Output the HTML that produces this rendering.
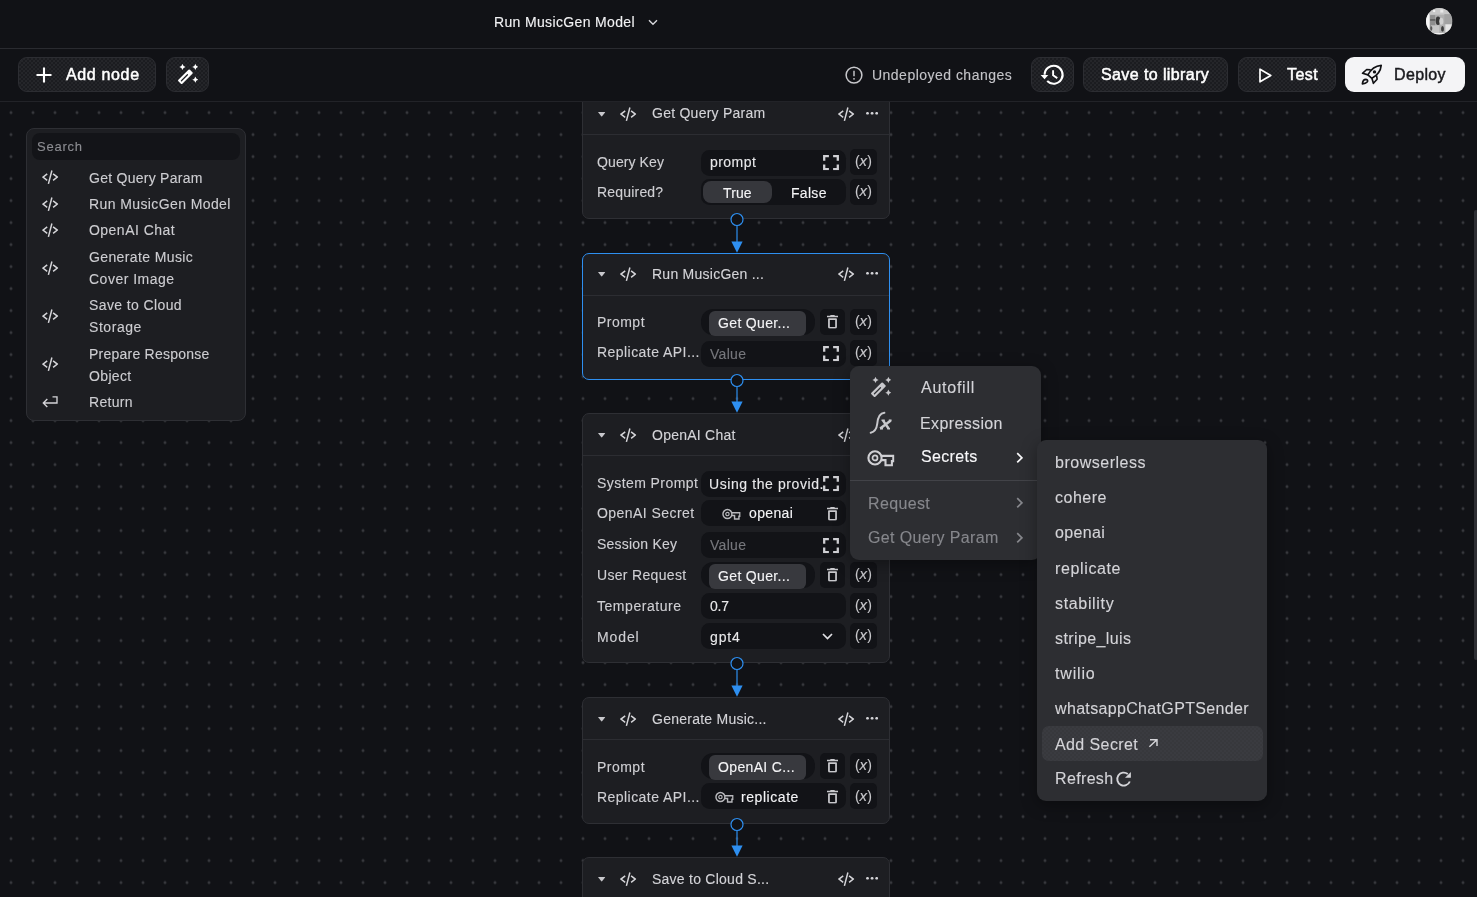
<!DOCTYPE html>
<html><head><meta charset="utf-8">
<style>
*{box-sizing:border-box;margin:0;padding:0}
html,body{width:1477px;height:897px;overflow:hidden;background:#111216;font-family:"Liberation Sans",sans-serif;color:#e4e4e7}
.a{position:absolute}
.t{position:absolute;white-space:nowrap;line-height:1;will-change:transform;-webkit-text-stroke:0.12px currentColor}
svg{position:absolute;overflow:visible}
#canvas{position:absolute;left:0;top:101px;width:1477px;height:796px;
 background-image:radial-gradient(circle at 11px 11px,#37383d 0,#37383d 1.15px,transparent 1.8px);
 background-size:22px 22px;background-position:0 0.6px}
.btn{position:absolute;top:57px;height:35px;border-radius:9px;background-color:#1b1c20;background-image:radial-gradient(circle at 1px 1px,rgba(255,255,255,0.045) 0.7px,transparent 1px),radial-gradient(circle at 3px 3px,rgba(255,255,255,0.045) 0.7px,transparent 1px);background-size:4px 4px;border:1px solid #2c2d32}
.card{position:absolute;left:582px;width:308px;background:#1d1e22;border:1px solid #2e2f34;border-radius:7px}
.med{-webkit-text-stroke:0.35px currentColor}
</style></head><body>

<svg width="0" height="0" style="position:absolute">
<defs>
<symbol id="code" viewBox="0 0 16.3 14.4"><path d="M5.2 3.8L0.95 7.1L5.2 10.4M9.9 0.5L6.4 13.9M11.1 3.8L15.35 7.1L11.1 10.4" fill="none" stroke="currentColor" stroke-width="1.5"/></symbol>
<symbol id="ret" viewBox="0 0 16 12.2"><path d="M10.5 0.9H15V7H1.3M5.3 3L1.3 7L5.3 11" fill="none" stroke="currentColor" stroke-width="1.35"/></symbol>
<symbol id="caret" viewBox="0 0 7.4 4.7"><path d="M0 0H7.4L3.7 4.7Z" fill="currentColor"/></symbol>
<symbol id="dots" viewBox="0 0 12.2 2.8"><circle cx="1.5" cy="1.4" r="1.45" fill="currentColor"/><circle cx="6.1" cy="1.4" r="1.45" fill="currentColor"/><circle cx="10.7" cy="1.4" r="1.45" fill="currentColor"/></symbol>
<symbol id="expand" viewBox="0 0 16 15.3"><path d="M1.2 5.8V1.2H5.9M10.1 1.2H14.8V5.8M14.8 9.5V14.1H10.1M5.9 14.1H1.2V9.5" fill="none" stroke="currentColor" stroke-width="2.3"/></symbol>
<symbol id="trash" viewBox="0 0 11 13.5"><path d="M0.2 1.45H10.8" stroke="currentColor" stroke-width="1.5" stroke-linecap="round"/><path d="M3.2 0.9Q3.2 -0.1 4.2 -0.1H6.8Q7.8 -0.1 7.8 0.9Z" fill="currentColor"/><path d="M1.95 4.0V12.1Q1.95 12.75 2.6 12.75H8.4Q9.05 12.75 9.05 12.1V4.0Z" fill="none" stroke="currentColor" stroke-width="1.75" stroke-linejoin="round"/></symbol>
<symbol id="key" viewBox="0 0 27.5 18"><circle cx="8" cy="8.9" r="6.6" fill="none" stroke="currentColor" stroke-width="2.1"/><circle cx="8" cy="8.9" r="2.5" fill="none" stroke="currentColor" stroke-width="1.7"/><path d="M14.3 6.9H26.3V12.1H24.9V16.2H18.5V11.1H14.2" fill="none" stroke="currentColor" stroke-width="2.1"/></symbol>
<symbol id="wand" viewBox="0 0 20 20"><g transform="translate(7.4 12.8) rotate(-45)"><path d="M-7.1 -2.8H7.1Q8.15 -2.8 8.15 -1.75V1.75Q8.15 2.8 7.1 2.8H-7.1Q-8.15 2.8 -8.15 1.75V-1.75Q-8.15 -2.8 -7.1 -2.8Z M-5.6 -0.6H2.9Q3.5 -0.6 3.5 0Q3.5 0.6 2.9 0.6H-5.6Q-6.2 0.6 -6.2 0Q-6.2 -0.6 -5.6 -0.6Z" fill="currentColor" fill-rule="evenodd"/></g><path d="M4.5 -0.20000000000000018Q5.06 2.34 7.6 2.9Q5.06 3.46 4.5 6.0Q3.94 3.46 1.4 2.9Q3.94 2.34 4.5 -0.20000000000000018Z M17.4 -0.20000000000000018Q17.96 2.34 20.5 2.9Q17.96 3.46 17.4 6.0Q16.84 3.46 14.299999999999999 2.9Q16.84 2.34 17.4 -0.20000000000000018Z M17.4 12.6Q17.96 15.14 20.5 15.7Q17.96 16.26 17.4 18.8Q16.84 16.26 14.299999999999999 15.7Q16.84 15.14 17.4 12.6Z" fill="currentColor"/></symbol>
<symbol id="chevr" viewBox="0 0 7 11.6"><path d="M1.2 1.2L5.9 5.8L1.2 10.4" fill="none" stroke="currentColor" stroke-width="1.7"/></symbol>
</defs></svg>
<div id="canvas"></div>
<div class="a" style="left:26px;top:128px;width:220px;height:292.5px;background:#1d1e22;border-radius:8px;border:1px solid #2e2f34"></div>
<div class="a" style="left:31.7px;top:133.4px;width:208.5px;height:26.2px;background:#131418;border-radius:8px;"></div>
<div class="t" style="left:37.3px;top:140.00px;font-size:13px;letter-spacing:0.75px;color:#8b8c91;">Search</div>
<svg style="left:41.7px;top:169.8px;color:#d4d4d8" width="16.3" height="14.4"><use href="#code"/></svg>
<div class="t" style="left:89.1px;top:171.00px;font-size:14px;letter-spacing:0.26px;color:#cdcdd1;">Get Query Param</div>
<svg style="left:41.7px;top:196.70000000000002px;color:#d4d4d8" width="16.3" height="14.4"><use href="#code"/></svg>
<div class="t" style="left:89.1px;top:197.00px;font-size:14px;letter-spacing:0.4px;color:#cdcdd1;">Run MusicGen Model</div>
<svg style="left:41.7px;top:222.8px;color:#d4d4d8" width="16.3" height="14.4"><use href="#code"/></svg>
<div class="t" style="left:89.1px;top:223.00px;font-size:14px;letter-spacing:0.47px;color:#cdcdd1;">OpenAI Chat</div>
<svg style="left:41.7px;top:260.8px;color:#d4d4d8" width="16.3" height="14.4"><use href="#code"/></svg>
<div class="t" style="left:89.1px;top:250.00px;font-size:14px;letter-spacing:0.38px;color:#cdcdd1;">Generate Music</div>
<div class="t" style="left:89.1px;top:272.00px;font-size:14px;letter-spacing:0.5px;color:#cdcdd1;">Cover Image</div>
<svg style="left:41.7px;top:308.8px;color:#d4d4d8" width="16.3" height="14.4"><use href="#code"/></svg>
<div class="t" style="left:89.1px;top:298.00px;font-size:14px;letter-spacing:0.39px;color:#cdcdd1;">Save to Cloud</div>
<div class="t" style="left:89.1px;top:320.00px;font-size:14px;letter-spacing:0.56px;color:#cdcdd1;">Storage</div>
<svg style="left:41.7px;top:357.0px;color:#d4d4d8" width="16.3" height="14.4"><use href="#code"/></svg>
<div class="t" style="left:89.1px;top:347.00px;font-size:14px;letter-spacing:0.24px;color:#cdcdd1;">Prepare Response</div>
<div class="t" style="left:89.1px;top:369.00px;font-size:14px;letter-spacing:0.36px;color:#cdcdd1;">Object</div>
<svg style="left:41.8px;top:395.9px;color:#d4d4d8" width="16" height="12.2"><use href="#ret"/></svg>
<div class="t" style="left:89.1px;top:395.00px;font-size:14px;letter-spacing:0.3px;color:#cdcdd1;">Return</div>
<div class="card" style="top:92px;height:127px;border-color:#2e2f34"></div>
<div class="a" style="left:583px;top:134px;width:306px;height:1px;background:#2c2d32;border-radius:0px;"></div>
<svg style="left:597.7px;top:111.9px;color:#c8c8cc" width="7.4" height="4.7"><use href="#caret"/></svg>
<svg style="left:620px;top:107.0px;color:#d4d4d8" width="16.3" height="14.4"><use href="#code"/></svg>
<div class="t" style="left:651.9px;top:106.00px;font-size:14px;letter-spacing:0.25px;color:#d4d4d8;">Get Query Param</div>
<svg style="left:838px;top:107.0px;color:#d4d4d8" width="16.3" height="14.4"><use href="#code"/></svg>
<svg style="left:866px;top:112.10000000000001px;color:#d4d4d8" width="12.2" height="2.8"><use href="#dots"/></svg>
<div class="t" style="left:597px;top:155.00px;font-size:14px;letter-spacing:0.1px;color:#cfcfd3;">Query Key</div>
<div class="a" style="left:700.5px;top:149.7px;width:145px;height:26px;background:#121317;border-radius:8.5px;"></div>
<div class="t" style="left:709.6px;top:155.00px;font-size:14px;letter-spacing:0.45px;color:#e8e8ea;">prompt</div>
<svg style="left:823.2px;top:154.89999999999998px;color:#d0d0d4" width="16" height="15.3"><use href="#expand"/></svg>
<div class="a" style="left:850px;top:148.5px;width:26.5px;height:26px;background:#121317;border-radius:5px;"></div>
<div class="t" style="left:855px;top:152.60px;font-size:14px;color:#c8c8cc;line-height:15px;-webkit-text-stroke:0.1px #c8c8cc">(<span style="font-style:italic;font-size:15px;margin:0 0.3px 0 -0.2px">x</span>)</div>
<div class="t" style="left:597px;top:185.00px;font-size:14px;letter-spacing:0.19px;color:#cfcfd3;">Required?</div>
<div class="a" style="left:700.5px;top:179.1px;width:145px;height:26.3px;background:#121317;border-radius:8.5px;"></div>
<div class="a" style="left:702.5px;top:181px;width:69.7px;height:22.3px;background:#36373c;border-radius:8px;"></div>
<div class="t" style="left:723px;top:186.00px;font-size:14px;letter-spacing:0.1px;color:#f4f4f6;">True</div>
<div class="t" style="left:790.5px;top:186.00px;font-size:14px;letter-spacing:0.3px;color:#f4f4f6;">False</div>
<div class="a" style="left:850px;top:179.1px;width:26.5px;height:26px;background:#121317;border-radius:5px;"></div>
<div class="t" style="left:855px;top:183.20px;font-size:14px;color:#c8c8cc;line-height:15px;-webkit-text-stroke:0.1px #c8c8cc">(<span style="font-style:italic;font-size:15px;margin:0 0.3px 0 -0.2px">x</span>)</div>
<div class="card" style="top:253px;height:127px;border-color:#2e8ff0"></div>
<div class="a" style="left:583px;top:295px;width:306px;height:1px;background:#2c2d32;border-radius:0px;"></div>
<svg style="left:597.7px;top:272.09999999999997px;color:#c8c8cc" width="7.4" height="4.7"><use href="#caret"/></svg>
<svg style="left:620px;top:267.2px;color:#d4d4d8" width="16.3" height="14.4"><use href="#code"/></svg>
<div class="t" style="left:651.9px;top:267.00px;font-size:14px;letter-spacing:0.25px;color:#d4d4d8;">Run MusicGen ...</div>
<svg style="left:838px;top:267.2px;color:#d4d4d8" width="16.3" height="14.4"><use href="#code"/></svg>
<svg style="left:866px;top:272.29999999999995px;color:#d4d4d8" width="12.2" height="2.8"><use href="#dots"/></svg>
<div class="t" style="left:597px;top:315.00px;font-size:14px;letter-spacing:0.48px;color:#cfcfd3;">Prompt</div>
<div class="a" style="left:700.5px;top:308.6px;width:114.5px;height:26px;background:#121317;border-radius:12px;"></div>
<div class="a" style="left:709.3px;top:311.1px;width:97px;height:24.5px;background:#38393e;border-radius:6px;"></div>
<div class="t" style="left:718.3px;top:316.00px;font-size:14px;letter-spacing:0.35px;color:#f4f4f6;">Get Quer...</div>
<div class="a" style="left:819.5px;top:308.6px;width:25.5px;height:26px;background:#121317;border-radius:5px;"></div>
<svg style="left:827px;top:314.90000000000003px;color:#c8c8cc" width="11" height="13.5"><use href="#trash"/></svg>
<div class="a" style="left:850px;top:308.6px;width:26.5px;height:26px;background:#121317;border-radius:5px;"></div>
<div class="t" style="left:855px;top:312.70px;font-size:14px;color:#c8c8cc;line-height:15px;-webkit-text-stroke:0.1px #c8c8cc">(<span style="font-style:italic;font-size:15px;margin:0 0.3px 0 -0.2px">x</span>)</div>
<div class="t" style="left:597px;top:345.00px;font-size:14px;letter-spacing:0.45px;color:#cfcfd3;">Replicate API...</div>
<div class="a" style="left:700.5px;top:341px;width:145px;height:25.7px;background:#121317;border-radius:8.5px;"></div>
<div class="t" style="left:709.6px;top:347.00px;font-size:14px;letter-spacing:0.3px;color:#76777c;">Value</div>
<svg style="left:823.2px;top:346.2px;color:#d0d0d4" width="16" height="15.3"><use href="#expand"/></svg>
<div class="a" style="left:850px;top:339.5px;width:26.5px;height:26px;background:#121317;border-radius:5px;"></div>
<div class="t" style="left:855px;top:343.60px;font-size:14px;color:#c8c8cc;line-height:15px;-webkit-text-stroke:0.1px #c8c8cc">(<span style="font-style:italic;font-size:15px;margin:0 0.3px 0 -0.2px">x</span>)</div>
<div class="card" style="top:413px;height:250px;border-color:#2e2f34"></div>
<div class="a" style="left:583px;top:455px;width:306px;height:1px;background:#2c2d32;border-radius:0px;"></div>
<svg style="left:597.7px;top:432.9px;color:#c8c8cc" width="7.4" height="4.7"><use href="#caret"/></svg>
<svg style="left:620px;top:428.0px;color:#d4d4d8" width="16.3" height="14.4"><use href="#code"/></svg>
<div class="t" style="left:651.9px;top:428.00px;font-size:14px;letter-spacing:0.25px;color:#d4d4d8;">OpenAI Chat</div>
<svg style="left:838px;top:428.0px;color:#d4d4d8" width="16.3" height="14.4"><use href="#code"/></svg>
<svg style="left:866px;top:433.09999999999997px;color:#d4d4d8" width="12.2" height="2.8"><use href="#dots"/></svg>
<div class="t" style="left:597px;top:476.00px;font-size:14px;letter-spacing:0.43px;color:#cfcfd3;">System Prompt</div>
<div class="a" style="left:700.5px;top:470.6px;width:145px;height:26px;background:#121317;border-radius:8.5px;"></div>
<div class="t" style="left:709px;top:477.00px;font-size:14px;letter-spacing:0.59px;color:#e8e8ea;">Using the provid.</div>
<svg style="left:823.2px;top:475.8px;color:#d0d0d4" width="16" height="15.3"><use href="#expand"/></svg>
<div class="a" style="left:850px;top:470.6px;width:26.5px;height:26px;background:#121317;border-radius:5px;"></div>
<div class="t" style="left:855px;top:474.70px;font-size:14px;color:#c8c8cc;line-height:15px;-webkit-text-stroke:0.1px #c8c8cc">(<span style="font-style:italic;font-size:15px;margin:0 0.3px 0 -0.2px">x</span>)</div>
<div class="t" style="left:597px;top:506.00px;font-size:14px;letter-spacing:0.45px;color:#cfcfd3;">OpenAI Secret</div>
<div class="a" style="left:700.5px;top:500.2px;width:145px;height:26px;background:#121317;border-radius:8.5px;"></div>
<svg style="left:721.8px;top:507.5px;color:#b8b8bc" width="18.7" height="12.24"><use href="#key"/></svg>
<div class="t" style="left:748.9px;top:506.00px;font-size:14px;letter-spacing:0.35px;color:#f4f4f6;">openai</div>
<svg style="left:827px;top:506.5px;color:#c8c8cc" width="11" height="13.5"><use href="#trash"/></svg>
<div class="t" style="left:597px;top:537.00px;font-size:14px;letter-spacing:0.21px;color:#cfcfd3;">Session Key</div>
<div class="a" style="left:700.5px;top:532.4px;width:145px;height:26px;background:#121317;border-radius:8.5px;"></div>
<div class="t" style="left:709.6px;top:538.00px;font-size:14px;letter-spacing:0.3px;color:#76777c;">Value</div>
<svg style="left:823.2px;top:537.6px;color:#d0d0d4" width="16" height="15.3"><use href="#expand"/></svg>
<div class="t" style="left:597px;top:568.00px;font-size:14px;letter-spacing:0.32px;color:#cfcfd3;">User Request</div>
<div class="a" style="left:700.5px;top:561.5px;width:114.5px;height:26px;background:#121317;border-radius:12px;"></div>
<div class="a" style="left:709.3px;top:564.0px;width:97px;height:24.5px;background:#38393e;border-radius:6px;"></div>
<div class="t" style="left:718.3px;top:569.00px;font-size:14px;letter-spacing:0.35px;color:#f4f4f6;">Get Quer...</div>
<div class="a" style="left:819.5px;top:561.5px;width:25.5px;height:26px;background:#121317;border-radius:5px;"></div>
<svg style="left:827px;top:567.8px;color:#c8c8cc" width="11" height="13.5"><use href="#trash"/></svg>
<div class="a" style="left:850px;top:561.5px;width:26.5px;height:26px;background:#121317;border-radius:5px;"></div>
<div class="t" style="left:855px;top:565.60px;font-size:14px;color:#c8c8cc;line-height:15px;-webkit-text-stroke:0.1px #c8c8cc">(<span style="font-style:italic;font-size:15px;margin:0 0.3px 0 -0.2px">x</span>)</div>
<div class="t" style="left:597px;top:599.00px;font-size:14px;letter-spacing:0.54px;color:#cfcfd3;">Temperature</div>
<div class="a" style="left:700.5px;top:592.9px;width:145px;height:26px;background:#121317;border-radius:8.5px;"></div>
<div class="t" style="left:709.6px;top:599.00px;font-size:14px;letter-spacing:-0.2px;color:#e8e8ea;">0.7</div>
<div class="a" style="left:850px;top:592.9px;width:26.5px;height:26px;background:#121317;border-radius:5px;"></div>
<div class="t" style="left:855px;top:597.00px;font-size:14px;color:#c8c8cc;line-height:15px;-webkit-text-stroke:0.1px #c8c8cc">(<span style="font-style:italic;font-size:15px;margin:0 0.3px 0 -0.2px">x</span>)</div>
<div class="t" style="left:597px;top:630.00px;font-size:14px;letter-spacing:0.9px;color:#cfcfd3;">Model</div>
<div class="a" style="left:700.5px;top:623.2px;width:145px;height:26px;background:#121317;border-radius:8.5px;"></div>
<div class="t" style="left:709.6px;top:630.00px;font-size:14px;letter-spacing:0.85px;color:#e8e8ea;">gpt4</div>
<div class="a" style="left:850px;top:623.2px;width:26.5px;height:26px;background:#121317;border-radius:5px;"></div>
<div class="t" style="left:855px;top:627.30px;font-size:14px;color:#c8c8cc;line-height:15px;-webkit-text-stroke:0.1px #c8c8cc">(<span style="font-style:italic;font-size:15px;margin:0 0.3px 0 -0.2px">x</span>)</div>
<svg style="left:821.5px;top:633px" width="11" height="7" viewBox="0 0 11 7"><path d="M1 1L5.5 5.5L10 1" fill="none" stroke="#e0e0e4" stroke-width="1.7"/></svg>
<div class="card" style="top:697px;height:127px;border-color:#2e2f34"></div>
<div class="a" style="left:583px;top:739px;width:306px;height:1px;background:#2c2d32;border-radius:0px;"></div>
<svg style="left:597.7px;top:716.9000000000001px;color:#c8c8cc" width="7.4" height="4.7"><use href="#caret"/></svg>
<svg style="left:620px;top:712.0px;color:#d4d4d8" width="16.3" height="14.4"><use href="#code"/></svg>
<div class="t" style="left:651.9px;top:712.00px;font-size:14px;letter-spacing:0.25px;color:#d4d4d8;">Generate Music...</div>
<svg style="left:838px;top:712.0px;color:#d4d4d8" width="16.3" height="14.4"><use href="#code"/></svg>
<svg style="left:866px;top:717.1px;color:#d4d4d8" width="12.2" height="2.8"><use href="#dots"/></svg>
<div class="t" style="left:597px;top:760.00px;font-size:14px;letter-spacing:0.48px;color:#cfcfd3;">Prompt</div>
<div class="a" style="left:700.5px;top:752.8px;width:114.5px;height:26px;background:#121317;border-radius:12px;"></div>
<div class="a" style="left:709.3px;top:755.3px;width:97px;height:24.5px;background:#38393e;border-radius:6px;"></div>
<div class="t" style="left:718.3px;top:760.00px;font-size:14px;letter-spacing:0.35px;color:#f4f4f6;">OpenAI C...</div>
<div class="a" style="left:819.5px;top:752.8px;width:25.5px;height:26px;background:#121317;border-radius:5px;"></div>
<svg style="left:827px;top:759.0999999999999px;color:#c8c8cc" width="11" height="13.5"><use href="#trash"/></svg>
<div class="a" style="left:850px;top:752.8px;width:26.5px;height:26px;background:#121317;border-radius:5px;"></div>
<div class="t" style="left:855px;top:756.90px;font-size:14px;color:#c8c8cc;line-height:15px;-webkit-text-stroke:0.1px #c8c8cc">(<span style="font-style:italic;font-size:15px;margin:0 0.3px 0 -0.2px">x</span>)</div>
<div class="t" style="left:597px;top:790.00px;font-size:14px;letter-spacing:0.45px;color:#cfcfd3;">Replicate API...</div>
<div class="a" style="left:700.5px;top:783.4px;width:145px;height:26.1px;background:#121317;border-radius:8.5px;"></div>
<svg style="left:715.2px;top:791px;color:#b8b8bc" width="18.7" height="12.24"><use href="#key"/></svg>
<div class="t" style="left:741.2px;top:790.00px;font-size:14px;letter-spacing:0.56px;color:#f4f4f6;">replicate</div>
<svg style="left:827px;top:789.6999999999999px;color:#c8c8cc" width="11" height="13.5"><use href="#trash"/></svg>
<div class="a" style="left:850px;top:783.4px;width:26.5px;height:26px;background:#121317;border-radius:5px;"></div>
<div class="t" style="left:855px;top:787.50px;font-size:14px;color:#c8c8cc;line-height:15px;-webkit-text-stroke:0.1px #c8c8cc">(<span style="font-style:italic;font-size:15px;margin:0 0.3px 0 -0.2px">x</span>)</div>
<div class="card" style="top:857px;height:80px;border-color:#2e2f34"></div>
<div class="a" style="left:583px;top:899px;width:306px;height:1px;background:#2c2d32;border-radius:0px;"></div>
<svg style="left:597.7px;top:876.9000000000001px;color:#c8c8cc" width="7.4" height="4.7"><use href="#caret"/></svg>
<svg style="left:620px;top:872.0px;color:#d4d4d8" width="16.3" height="14.4"><use href="#code"/></svg>
<div class="t" style="left:651.9px;top:872.00px;font-size:14px;letter-spacing:0.25px;color:#d4d4d8;">Save to Cloud S...</div>
<svg style="left:838px;top:872.0px;color:#d4d4d8" width="16.3" height="14.4"><use href="#code"/></svg>
<svg style="left:866px;top:877.1px;color:#d4d4d8" width="12.2" height="2.8"><use href="#dots"/></svg>
<svg style="left:721px;top:208px" width="32" height="47" viewBox="0 0 32 47"><line x1="16" y1="17.5" x2="16" y2="35" stroke="#2e8ff0" stroke-width="1.2"/><path d="M10.4 33.5H21.6L16 44.7Z" fill="#2e8ff0"/><circle cx="16" cy="11.5" r="6" fill="#111216" stroke="#2e8ff0" stroke-width="1.2"/></svg>
<svg style="left:721px;top:369px" width="32" height="46" viewBox="0 0 32 46"><line x1="16" y1="17.5" x2="16" y2="34" stroke="#2e8ff0" stroke-width="1.2"/><path d="M10.4 32.5H21.6L16 43.7Z" fill="#2e8ff0"/><circle cx="16" cy="11.5" r="6" fill="#111216" stroke="#2e8ff0" stroke-width="1.2"/></svg>
<svg style="left:721px;top:652px" width="32" height="47" viewBox="0 0 32 47"><line x1="16" y1="17.5" x2="16" y2="35" stroke="#2e8ff0" stroke-width="1.2"/><path d="M10.4 33.5H21.6L16 44.7Z" fill="#2e8ff0"/><circle cx="16" cy="11.5" r="6" fill="#111216" stroke="#2e8ff0" stroke-width="1.2"/></svg>
<svg style="left:721px;top:813px" width="32" height="46" viewBox="0 0 32 46"><line x1="16" y1="17.5" x2="16" y2="34" stroke="#2e8ff0" stroke-width="1.2"/><path d="M10.4 32.5H21.6L16 43.7Z" fill="#2e8ff0"/><circle cx="16" cy="11.5" r="6" fill="#111216" stroke="#2e8ff0" stroke-width="1.2"/></svg>
<div class="a" style="left:850px;top:366px;width:191px;height:193.5px;background:#2d2e32;border-radius:9px;box-shadow:0 4px 16px rgba(0,0,0,0.35)"></div>
<svg style="left:871px;top:377px;color:#c8c8cc" width="20" height="20"><use href="#wand"/></svg>
<div class="t" style="left:920.8px;top:380.00px;font-size:16px;letter-spacing:0.75px;color:#d4d4d8;">Autofill</div>
<svg style="left:869px;top:411px" width="24" height="24" viewBox="0 0 24 24"><path d="M1.7 21.7C5 21 7.6 18 8.2 13C8.8 6 10.5 2.2 15.4 1.8" fill="none" stroke="#c8c8cc" stroke-width="2" stroke-linecap="round"/><path d="M11.2 17.5L21.8 9.4M13.9 9.4L19.6 17.5" fill="none" stroke="#c8c8cc" stroke-width="2.5"/><path d="M12.5 9.2H15.8M18.3 17.8H21M11 17.8H14M19.8 9.2H22.6" stroke="#c8c8cc" stroke-width="1.6"/></svg>
<div class="t" style="left:919.7px;top:416.00px;font-size:16px;letter-spacing:0.37px;color:#d4d4d8;">Expression</div>
<svg style="left:867px;top:449px;color:#d0d0d4" width="27.5" height="18"><use href="#key"/></svg>
<div class="t" style="left:920.8px;top:449.00px;font-size:16px;letter-spacing:0.35px;color:#f8f8fa;">Secrets</div>
<svg style="left:1016px;top:452px;color:#f8f8fa" width="7" height="11.6"><use href="#chevr"/></svg>
<div class="a" style="left:850px;top:480px;width:191px;height:1px;background:#424348;border-radius:0px;"></div>
<div class="t" style="left:868.3px;top:496.00px;font-size:16px;letter-spacing:0.35px;color:#86878c;">Request</div>
<svg style="left:1016px;top:497px;color:#86878c" width="7" height="11.6"><use href="#chevr"/></svg>
<div class="t" style="left:867.6px;top:530.00px;font-size:16px;letter-spacing:0.35px;color:#86878c;">Get Query Param</div>
<svg style="left:1016px;top:532px;color:#86878c" width="7" height="11.6"><use href="#chevr"/></svg>
<div class="a" style="left:1037px;top:440.4px;width:229.6px;height:360.5px;background:#2d2e32;border-radius:9px;box-shadow:0 4px 16px rgba(0,0,0,0.35)"></div>
<div class="t" style="left:1055.4px;top:455.00px;font-size:16px;letter-spacing:0.52px;color:#d4d4d8;">browserless</div>
<div class="t" style="left:1055.4px;top:490.00px;font-size:16px;letter-spacing:0.51px;color:#d4d4d8;">cohere</div>
<div class="t" style="left:1055.4px;top:525.00px;font-size:16px;letter-spacing:0.37px;color:#d4d4d8;">openai</div>
<div class="t" style="left:1055.4px;top:561.00px;font-size:16px;letter-spacing:0.63px;color:#d4d4d8;">replicate</div>
<div class="t" style="left:1055.4px;top:596.00px;font-size:16px;letter-spacing:0.66px;color:#d4d4d8;">stability</div>
<div class="t" style="left:1055.4px;top:631.00px;font-size:16px;letter-spacing:0.39px;color:#d4d4d8;">stripe_luis</div>
<div class="t" style="left:1055.4px;top:666.00px;font-size:16px;letter-spacing:0.83px;color:#d4d4d8;">twilio</div>
<div class="t" style="left:1055.4px;top:701.00px;font-size:16px;letter-spacing:0.34px;color:#d4d4d8;">whatsappChatGPTSender</div>
<div class="a" style="left:1041.5px;top:726.4px;width:221.2px;height:35px;background:#3a3b40;border-radius:7px;background-image:radial-gradient(circle at 1px 1px,rgba(0,0,0,0.06) 0.7px,transparent 1px),radial-gradient(circle at 3px 3px,rgba(0,0,0,0.06) 0.7px,transparent 1px);background-size:4px 4px"></div>
<div class="t" style="left:1055.4px;top:737.00px;font-size:16px;letter-spacing:0.4px;color:#d4d4d8;">Add Secret</div>
<svg style="left:1144px;top:734px" width="20" height="18" viewBox="0 0 20 18"><path d="M5.4 12.8L12.6 6M6 5.8H13V11.9" fill="none" stroke="#d4d4d8" stroke-width="1.45"/></svg>
<div class="t" style="left:1055.4px;top:771.00px;font-size:16px;letter-spacing:0.35px;color:#d4d4d8;">Refresh</div>
<svg style="left:1112px;top:768px" width="24" height="22" viewBox="0 0 24 22"><path d="M15.8 6A6.5 6.5 0 1 0 17.8 13.5" fill="none" stroke="#d4d4d8" stroke-width="1.9"/><path d="M18.9 3.9V9.8H13Z" fill="#d4d4d8"/></svg>
<div class="a" style="left:0px;top:0px;width:1477px;height:49px;background:#111216;border-radius:0px;border-bottom:1px solid #2a2b30"></div>
<div class="t" style="left:494.4px;top:15.00px;font-size:14px;letter-spacing:0.35px;color:#f2f2f4;">Run MusicGen Model</div>
<svg style="left:648px;top:18.5px" width="10" height="7" viewBox="0 0 10 7"><path d="M1 1.2L5 5.2L9 1.2" fill="none" stroke="#d8d8dc" stroke-width="1.4"/></svg>
<svg style="left:1426px;top:8.3px" width="26.5" height="26.5" viewBox="0 0 26 26"><defs><clipPath id="avc"><circle cx="13" cy="13" r="13"/></clipPath><filter id="avb" x="-20%" y="-20%" width="140%" height="140%"><feGaussianBlur stdDeviation="0.75"/></filter></defs><g clip-path="url(#avc)"><rect width="26" height="26" fill="#b0b0b0"/><g filter="url(#avb)"><rect x="-2" y="-2" width="5.5" height="30" fill="#f6f6f6"/><rect x="3" y="0" width="20" height="6.5" fill="#c8c8c8"/><rect x="7" y="2" width="2" height="2" fill="#f0f0f0"/><rect x="14" y="1.5" width="3" height="3" fill="#e8e8e8"/><rect x="4" y="7" width="5" height="13" fill="#8e8e8e"/><rect x="4" y="11" width="5" height="1.5" fill="#5a5a5a"/><ellipse cx="11.8" cy="12.5" rx="2.3" ry="4.2" fill="#383838"/><ellipse cx="15" cy="13" rx="2" ry="3.5" fill="#d0d0d0"/><rect x="18" y="6" width="7" height="10" fill="#a2a2a2"/><rect x="19" y="16" width="6" height="8" fill="#e6e6e6"/><rect x="5" y="17" width="8" height="9" fill="#c6c6c6"/><ellipse cx="16.2" cy="20.5" rx="1.4" ry="2.8" fill="#3e3e3e"/><ellipse cx="5.2" cy="20" rx="1" ry="2.2" fill="#555"/><rect x="0" y="24.5" width="26" height="3" fill="#f2f2f2"/></g></g></svg>
<div class="a" style="left:0px;top:49px;width:1477px;height:53px;background:#111216;border-radius:0px;border-bottom:1px solid #222328"></div>
<div class="btn" style="left:18px;width:138px"></div>
<svg style="left:35.5px;top:66.8px" width="16" height="16" viewBox="0 0 16 16"><path d="M8 0.5V15.5M0.5 8H15.5" stroke="#fff" stroke-width="2.1"/></svg>
<div class="t" style="left:66.2px;top:67.00px;font-size:16px;letter-spacing:0.65px;color:#fff;-webkit-text-stroke:0.5px #fff">Add node</div>
<div class="btn" style="left:166px;width:43px"></div>
<svg style="left:177.8px;top:64px;color:#fff" width="20" height="20"><use href="#wand"/></svg>
<svg style="left:844.5px;top:65.5px" width="18" height="18" viewBox="0 0 18 18"><circle cx="9" cy="9.1" r="7.9" fill="none" stroke="#c8c8cc" stroke-width="1.5"/><path d="M9 4.7V10.2" stroke="#c8c8cc" stroke-width="1.45"/><circle cx="9" cy="12.8" r="0.9" fill="#c8c8cc"/></svg>
<div class="t" style="left:871.6px;top:68.00px;font-size:14px;letter-spacing:0.48px;color:#c4c4c8;">Undeployed changes</div>
<div class="btn" style="left:1031px;width:43px"></div>
<svg style="left:1036px;top:60px" width="34" height="30" viewBox="0 0 34 30"><path d="M8.6 14.7A9 9 0 1 1 11.2 21.1" fill="none" stroke="#fff" stroke-width="2.1"/><path d="M4.7 15H12.3L8.5 19.3Z" fill="#fff"/><path d="M17.1 10.2V15.3L21.3 18.1" fill="none" stroke="#fff" stroke-width="1.9"/></svg>
<div class="btn" style="left:1083px;width:145px"></div>
<div class="t" style="left:1101px;top:67.00px;font-size:16px;letter-spacing:0.4px;color:#fff;-webkit-text-stroke:0.5px #fff">Save to library</div>
<div class="btn" style="left:1238px;width:98px"></div>
<svg style="left:1258.5px;top:67.5px" width="13" height="15" viewBox="0 0 13 15"><path d="M1 1.2V13.8L11.8 7.5Z" fill="none" stroke="#fff" stroke-width="1.7" stroke-linejoin="round"/></svg>
<div class="t" style="left:1287px;top:67.00px;font-size:16px;letter-spacing:0.45px;color:#fff;-webkit-text-stroke:0.5px #fff">Test</div>
<div class="a" style="left:1345px;top:57px;width:120px;height:35px;background:#f4f4f6;border-radius:9px;"></div>
<svg style="left:1358px;top:62px" width="28" height="26" viewBox="0 0 28 26"><g fill="none" stroke="#111114" stroke-width="1.65" stroke-linejoin="round"><path d="M9.9 12.8C12 9 16 4 23.2 3.4C22.6 10 17.8 14.2 13.9 16.3Z"/><path d="M12.7 7.9L8.7 7.5L4.5 11.3L10 12.9"/><path d="M18.6 13.7L19.1 17.2L15.4 21.3L13.9 16.3"/><path d="M4.4 21.9C4.6 19.3 6 17.4 8 17.4C9.6 17.5 10.2 19 9.2 20C8 21.2 6 21.7 4.4 21.9Z"/></g><circle cx="16.5" cy="9.9" r="1.7" fill="#111114"/></svg>
<div class="t" style="left:1394.2px;top:67.00px;font-size:16px;letter-spacing:0.35px;color:#1a1a1e;-webkit-text-stroke:0.45px #1a1a1e">Deploy</div>
<div class="a" style="left:1473.5px;top:210px;width:4px;height:450px;background:#2e2f34;border-radius:3px;"></div>
</body></html>
